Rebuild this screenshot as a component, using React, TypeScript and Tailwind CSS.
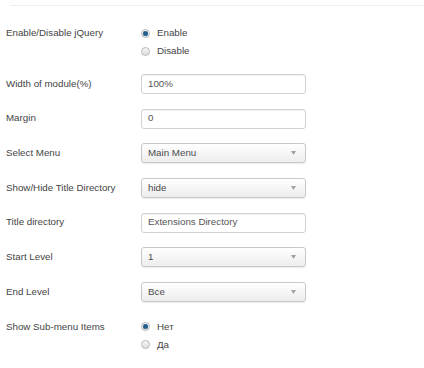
import React from "react";

function Radio({ checked, label }: { checked?: boolean; label: string }) {
  return (
    <div className="flex h-[18px] items-center">
      <span className="flex h-[9px] w-[9px] items-center justify-center rounded-full border border-[#b8b8b8] bg-gradient-to-b from-[#f6f6f6] to-[#dedede]">
        {checked && <span className="h-[5px] w-[5px] rounded-full bg-[#1f5f8e]" />}
      </span>
      <span className="ml-[7px] text-[#444]">{label}</span>
    </div>
  );
}

function TextInput({ value }: { value: string }) {
  return (
    <div className="flex h-[20px] w-[165px] items-center rounded-[3px] border border-[#d2d2d2] bg-white pl-[6px] text-[#555] shadow-[inset_0_1px_1px_rgba(0,0,0,0.06)]">
      {value}
    </div>
  );
}

function Select({ value }: { value: string }) {
  return (
    <div className="flex h-[20px] w-[165px] items-center justify-between rounded-[3px] border border-[#c8c8c8] bg-gradient-to-b from-white to-[#ededed] pl-[6px] pr-[9px] text-[#4a4a4a] shadow-[0_1px_1px_rgba(0,0,0,0.08)]">
      <span>{value}</span>
      <svg width="5" height="4" viewBox="0 0 5 4">
        <path d="M0 0 L5 0 L2.5 4 Z" fill="#a0a0a0" />
      </svg>
    </div>
  );
}

function Row({ label, children }: { label: string; children: React.ReactNode }) {
  return (
    <div className="flex items-center">
      <div className="w-[135px] shrink-0 text-[#444]">{label}</div>
      {children}
    </div>
  );
}

export default function App() {
  return (
    <div
      className="relative h-[368px] w-[424px] overflow-hidden bg-white text-[9.75px]"
      style={{ fontFamily: '"Liberation Sans", Arial, sans-serif' }}
    >
      <div className="ml-[10px] mt-[5px] h-[1px] bg-[#efefef]" />
      <div className="flex flex-col pl-[6px] pt-[18px]">
        <div className="flex">
          <div className="w-[135px] shrink-0 pt-[3px] leading-[12px] text-[#444]">Enable/Disable jQuery</div>
          <div className="flex flex-col">
            <Radio checked label="Enable" />
            <Radio label="Disable" />
          </div>
        </div>
        <div className="mt-[14px] flex flex-col gap-[14.67px]">
          <Row label="Width of module(%)">
            <TextInput value="100%" />
          </Row>
          <Row label="Margin">
            <TextInput value="0" />
          </Row>
          <Row label="Select Menu">
            <Select value="Main Menu" />
          </Row>
          <Row label="Show/Hide Title Directory">
            <Select value="hide" />
          </Row>
          <Row label="Title directory">
            <TextInput value="Extensions Directory" />
          </Row>
          <Row label="Start Level">
            <Select value="1" />
          </Row>
          <Row label="End Level">
            <Select value="Все" />
          </Row>
        </div>
        <div className="mt-[16px] flex">
          <div className="w-[135px] shrink-0 pt-[3px] leading-[12px] text-[#444]">Show Sub-menu Items</div>
          <div className="flex flex-col">
            <Radio checked label="Нет" />
            <Radio label="Да" />
          </div>
        </div>
      </div>
    </div>
  );
}
